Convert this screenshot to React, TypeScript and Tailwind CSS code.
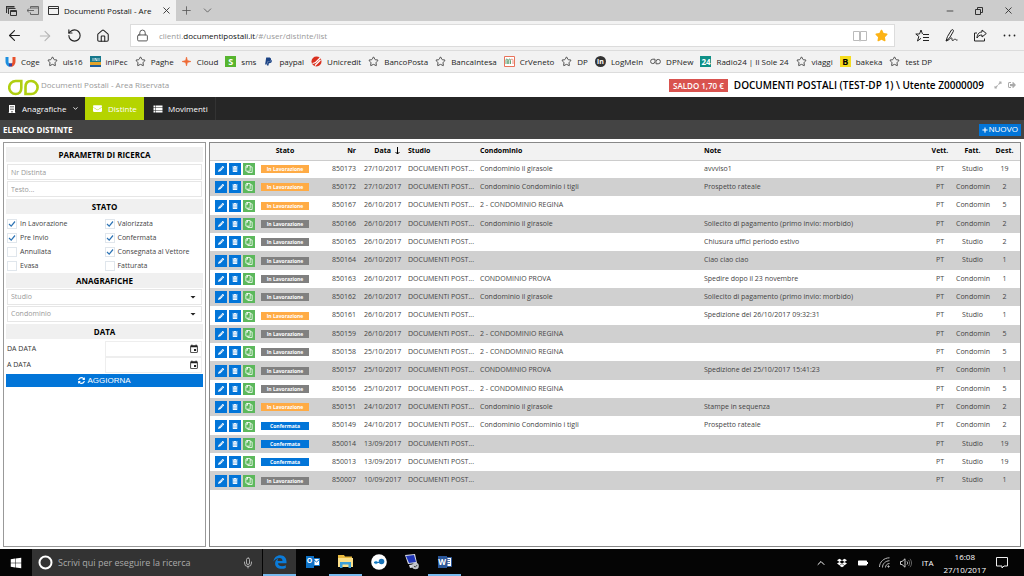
import type { ReactNode } from 'react';
import { ArrowLeft, ArrowRight, BookOpen, ChevronDown, ChevronUp, House, Lock, Mic, Minus, Plus, RotateCw, Star, X } from 'lucide-react';
import { FaBuilding, FaDropbox, FaEnvelope, FaExpandAlt, FaPaypal, FaPencilAlt, FaPlus, FaRegCopy, FaSignOutAlt, FaStar, FaSyncAlt, FaTrashAlt, FaWindows } from 'react-icons/fa';
import { MdArrowDropDown, MdBatteryFull, MdEvent, MdViewList } from 'react-icons/md';

type Stato = 'lavorazione' | 'sospesa' | 'confermata';

interface Distinta {
  nr: number;
  data: string;
  stato: Stato;
  condominio: string;
  note: string;
  fatt: 'Studio' | 'Condomin';
  dest: number;
}

const STATO_STYLE: Record<Stato, { label: string; className: string }> = {
  lavorazione: { label: 'In Lavorazione', className: 'bg-[#ffab45]' },
  sospesa: { label: 'In Lavorazione', className: 'bg-[#808080]' },
  confermata: { label: 'Confermata', className: 'bg-[#0275d8]' },
};

const DISTINTE: Distinta[] = [
  { nr: 850173, data: '27/10/2017', stato: 'lavorazione', condominio: 'Condominio il girasole', note: 'avvviso1', fatt: 'Studio', dest: 19 },
  { nr: 850172, data: '27/10/2017', stato: 'lavorazione', condominio: 'Condominio Condominio i tigli', note: 'Prospetto rateale', fatt: 'Condomin', dest: 2 },
  { nr: 850167, data: '26/10/2017', stato: 'lavorazione', condominio: '2 - CONDOMINIO REGINA', note: '', fatt: 'Condomin', dest: 5 },
  { nr: 850166, data: '26/10/2017', stato: 'sospesa', condominio: 'Condominio il girasole', note: 'Sollecito di pagamento (primo invio: morbido)', fatt: 'Condomin', dest: 2 },
  { nr: 850165, data: '26/10/2017', stato: 'sospesa', condominio: '', note: 'Chiusura uffici periodo estivo', fatt: 'Studio', dest: 2 },
  { nr: 850164, data: '26/10/2017', stato: 'sospesa', condominio: '', note: 'Ciao ciao ciao', fatt: 'Studio', dest: 1 },
  { nr: 850163, data: '26/10/2017', stato: 'sospesa', condominio: 'CONDOMINIO PROVA', note: 'Spedire dopo il 23 novembre', fatt: 'Condomin', dest: 1 },
  { nr: 850162, data: '26/10/2017', stato: 'sospesa', condominio: 'Condominio il girasole', note: 'Sollecito di pagamento (primo invio: morbido)', fatt: 'Condomin', dest: 2 },
  { nr: 850161, data: '26/10/2017', stato: 'lavorazione', condominio: '', note: 'Spedizione del 26/10/2017 09:32:31', fatt: 'Studio', dest: 1 },
  { nr: 850159, data: '26/10/2017', stato: 'sospesa', condominio: '2 - CONDOMINIO REGINA', note: '', fatt: 'Condomin', dest: 5 },
  { nr: 850158, data: '25/10/2017', stato: 'sospesa', condominio: '2 - CONDOMINIO REGINA', note: '', fatt: 'Condomin', dest: 5 },
  { nr: 850157, data: '25/10/2017', stato: 'sospesa', condominio: 'CONDOMINIO PROVA', note: 'Spedizione del 25/10/2017 15:41:23', fatt: 'Condomin', dest: 1 },
  { nr: 850156, data: '25/10/2017', stato: 'sospesa', condominio: '2 - CONDOMINIO REGINA', note: '', fatt: 'Condomin', dest: 5 },
  { nr: 850151, data: '24/10/2017', stato: 'lavorazione', condominio: 'Condominio il girasole', note: 'Stampe in sequenza', fatt: 'Condomin', dest: 2 },
  { nr: 850149, data: '24/10/2017', stato: 'confermata', condominio: 'Condominio Condominio i tigli', note: 'Prospetto rateale', fatt: 'Condomin', dest: 2 },
  { nr: 850014, data: '13/09/2017', stato: 'confermata', condominio: '', note: '', fatt: 'Studio', dest: 19 },
  { nr: 850013, data: '13/09/2017', stato: 'confermata', condominio: '', note: '', fatt: 'Studio', dest: 19 },
  { nr: 850007, data: '10/09/2017', stato: 'sospesa', condominio: '', note: '', fatt: 'Studio', dest: 1 },
];

const STATI = [
  { label: 'In Lavorazione', checked: true },
  { label: 'Valorizzata', checked: true },
  { label: 'Pre Invio', checked: true },
  { label: 'Confermata', checked: true },
  { label: 'Annullata', checked: false },
  { label: 'Consegnata al Vettore', checked: true },
  { label: 'Evasa', checked: false },
  { label: 'Fatturata', checked: false },
];

const outlineStar = <Star size={11} strokeWidth={2} className="text-[#444]" />;

const PREFERITI: { label: string; icon: ReactNode }[] = [
  {
    label: 'Coge',
    icon: (
      <svg width="11" height="11" viewBox="0 0 11 11" fill="none" strokeWidth="3">
        <path d="M2 1v4.500a3.300 3.300 0 0 0 3.500 3.700" stroke="#1c8fe0" />
        <path d="M5.500 9.200A3.300 3.300 0 0 0 9 5.500V1" stroke="#e8502b" />
        <path d="M4 8.800h3" stroke="#3b3f9c" />
      </svg>
    ),
  },
  { label: 'uls16', icon: outlineStar },
  {
    label: 'iniPec',
    icon: (
      <svg width="11" height="11" viewBox="0 0 11 11">
        <path fill="#16788c" d="M0 0h11v6H0z" />
        <path fill="#e2a32c" d="M0 6h11v3H0z" />
        <path fill="#1d5c9d" d="M0 9h11v2H0z" />
        <path stroke="#fff" d="M3 2v3M5 5V2l2 3V2M9 2v3" fill="none" strokeWidth=".7" />
      </svg>
    ),
  },
  { label: 'Paghe', icon: outlineStar },
  {
    label: 'Cloud',
    icon: (
      <svg width="11" height="11" viewBox="0 0 11 11">
        <path fill="#ee6a35" d="M5.500 1l.9 3.600L10 5.500l-3.600.9L5.500 10l-.9-3.600L1 5.500l3.600-.9z" stroke="#ee6a35" strokeWidth=".6" />
      </svg>
    ),
  },
  { label: 'sms', icon: <span className="flex size-[11px] items-center justify-center bg-[#57b52f] text-[9px] leading-none font-bold text-white">S</span> },
  { label: 'paypal', icon: <FaPaypal size={9} className="mx-px text-[#1a4284]" /> },
  {
    label: 'Unicredit',
    icon: (
      <svg width="11" height="11" viewBox="0 0 11 11">
        <circle cx="5.500" cy="5.500" r="5" fill="#d9301f" />
        <path d="M1.500 7.500L4.500 6.500 9 2M4 9.500L9.500 4" stroke="#fff" strokeWidth="1.200" fill="none" />
      </svg>
    ),
  },
  { label: 'BancoPosta', icon: outlineStar },
  { label: 'BancaIntesa', icon: outlineStar },
  {
    label: 'CrVeneto',
    icon: (
      <svg width="11" height="11" viewBox="0 0 11 11" fill="none">
        <path d="M.5.5h10v10H.5z" fill="#fff" stroke="#e8735a" />
        <path d="M2 8V3.500c1-1 2 0 1.700 1V8M4.800 8V3.500c1-1 2 0 1.700 1V8" stroke="#3f8a57" strokeWidth=".8" />
        <path d="M7 3.500c1.500-1 2 0 2 1V8" stroke="#e8735a" strokeWidth=".8" />
      </svg>
    ),
  },
  { label: 'DP', icon: outlineStar },
  { label: 'LogMeIn', icon: <span className="flex size-[11px] items-center justify-center rounded-full bg-[#333] text-[7px] leading-none font-bold text-white">in</span> },
  {
    label: 'DPNew',
    icon: (
      <svg width="11" height="11" viewBox="0 0 11 11" fill="none" stroke="#555">
        <path d="M5 3.200H2.800a2.200 2.200 0 1 0 2.200 2.300zM6 7.800h2.200a2.200 2.200 0 1 0-2.200-2.300z" />
      </svg>
    ),
  },
  { label: 'Radio24 | Il Sole 24', icon: <span className="flex size-[11px] items-center justify-center bg-[#0f9086] text-[8px] leading-none font-bold text-white">24</span> },
  { label: 'viaggi', icon: outlineStar },
  { label: 'bakeka', icon: <span className="flex size-[11px] items-center justify-center bg-[#f5dc1e] text-[9px] leading-none font-bold text-black">B</span> },
  { label: 'test DP', icon: outlineStar },
];

function BrowserTabs() {
  return (
    <div className="flex h-[21px] items-stretch bg-[#cccccc] text-[#333]">
      <div className="flex w-[43px] items-center justify-between pr-1 pl-1.5">
        <svg width="11" height="10" viewBox="0 0 11 10" fill="none" stroke="#333">
          <path d="M.5 7V.5h8M.5 2h8" strokeWidth="1.200" />
          <path d="M2.500 8V2.500h7M4.500 4.500h6v5h-6zM4.500 5.500h6" />
        </svg>
        <svg width="12" height="9" viewBox="0 0 12 9" fill="none" stroke="#666">
          <path d="M3.500 2.500v-2h8v8h-8v-2M3.500 2h8M0 4.500h7M2 2.500l-2 2 2 2" />
        </svg>
      </div>
      <div className="flex w-[133px] items-center bg-[#f2f2f2] pr-1 pl-[5px]">
        <svg width="11" height="9" viewBox="0 0 11 9" fill="none" stroke="#333">
          <path d="M.5.5h10v8H.5zM.5 2.500h10" />
        </svg>
        <span className="flex-1 pl-[5px] text-[8px] whitespace-nowrap text-[#111]">Documenti Postali - Are</span>
        <button type="button" aria-label="Chiudi scheda"><X size={11} strokeWidth={2} /></button>
      </div>
      <div className="flex flex-1 items-center gap-2 pl-1 text-[#555]">
        <button type="button" aria-label="Nuova scheda"><Plus size={13} strokeWidth={1.5} /></button>
        <button type="button" aria-label="Anteprime"><ChevronDown size={13} strokeWidth={1.5} /></button>
      </div>
      <div className="flex items-center gap-5 pr-2.5">
        <button type="button" aria-label="Riduci"><Minus size={10} strokeWidth={2} /></button>
        <button type="button" aria-label="Ripristina">
          <svg width="8" height="8" viewBox="0 0 8 8" fill="none" stroke="#333"><path d="M.5 2.500h5v5h-5zM2.500 2V.5h5v5H6" /></svg>
        </button>
        <button type="button" aria-label="Chiudi"><X size={11} strokeWidth={2} /></button>
      </div>
    </div>
  );
}

function AddressBar() {
  return (
    <div className="flex h-[30px] items-center border-b border-[#dcdcdc] bg-[#f2f2f2] pr-2 pl-1.5 text-[#222]">
      <div className="flex items-center gap-3.5">
        <button type="button" aria-label="Indietro"><ArrowLeft size={17} strokeWidth={1.6} /></button>
        <button type="button" aria-label="Avanti" className="text-[#b5b5b5]"><ArrowRight size={16} strokeWidth={1.6} /></button>
        <button type="button" aria-label="Aggiorna">
          <RotateCw size={15} strokeWidth={1.8} className="-scale-x-100" />
        </button>
        <button type="button" aria-label="Pagina iniziale"><House size={14} strokeWidth={1.8} /></button>
      </div>
      <div className="ml-5 flex h-[23px] flex-1 items-center border border-[#dcdcdc] bg-white pr-1.5 pl-[5px]">
        <Lock size={13} strokeWidth={1.8} className="text-[#555]" />
        <p className="flex-1 pl-2.5 text-[8px] text-[#999]">
          clienti.<span className="text-[#111]">documentipostali.it</span>/#/user/distinte/list
        </p>
        <button type="button" aria-label="Visualizzazione lettura" className="text-[#bbb]">
          <svg width="14" height="12" viewBox="0 0 14 12" fill="none" stroke="currentColor">
            <path d="M.5 1.500h6v9h-6zM7.500 1.500h6v9h-6zM7 1.500v10" />
          </svg>
        </button>
        <button type="button" aria-label="Preferito" className="ml-2 text-[#fcb316]"><FaStar size={13} /></button>
      </div>
      <div className="ml-5 flex items-center gap-4">
        <button type="button" aria-label="Hub">
          <svg width="14" height="13" viewBox="0 0 14 13" fill="none" stroke="currentColor">
            <path d="M7.500 5L6 1 4.500 5H.8l3 2.500L2.500 12 6 9.300M8 5.500h6M8 8.500h6M8 11.500h6" />
          </svg>
        </button>
        <button type="button" aria-label="Note Web">
          <svg width="13" height="13" viewBox="0 0 13 13" fill="none" stroke="currentColor">
            <path d="M1 12L2.500 7.500 6.500 1c1-1 2.500 0 1.800 1.500L4.500 9 1 12c3-.5 4-3 5.500-3s-.5 2.500 1 2.500 1.500-1.500 2.500-1.500.5 1.500 2.500 1" />
          </svg>
        </button>
        <button type="button" aria-label="Condividi">
          <svg width="13" height="13" viewBox="0 0 13 13" fill="none" stroke="currentColor">
            <path d="M3 4H.5v8h10V9.500M8 1l4.300 3.500L8 8V6C5.500 6 4 7 3 9c0-3 1.500-6 5-6z" />
          </svg>
        </button>
        <button type="button" aria-label="Altro">
          <svg width="13" height="3" viewBox="0 0 13 3" fill="currentColor">
            <circle cx="1.500" cy="1.500" r=".9" /><circle cx="6.500" cy="1.500" r=".9" /><circle cx="11.500" cy="1.500" r=".9" />
          </svg>
        </button>
      </div>
    </div>
  );
}

function FavoritesBar() {
  return (
    <nav className="flex h-[22px] items-center gap-[7px] border-b border-[#dcdcdc] bg-[#f2f2f2] pl-[5px] text-[8px] text-[#222]">
      {PREFERITI.map(p => (
        <a key={p.label} href="#" className="flex items-center gap-[5px] whitespace-nowrap">
          {p.icon}
          {p.label}
        </a>
      ))}
    </nav>
  );
}

function AppHeader() {
  return (
    <>
      <header className="flex h-6 items-center bg-white pr-2 pl-2">
        <svg width="31" height="17" viewBox="0 0 31 17" fill="none" stroke="#b0cf10" strokeWidth="2.600" className="mt-1">
          <path d="M13.300 2H7.700a6.300 6.300 0 0 0 0 13c3.600 0 5.600-2.500 5.600-6z" />
          <path d="M17.500 15h5.600a6.300 6.300 0 0 0 0-13c-3.600 0-5.600 2.500-5.600 6z" />
        </svg>
        <span className="pl-0.5 text-[8px] text-[#999]">Documenti Postali - Area Riservata</span>
        <div className="ml-auto flex items-center">
          <span className="bg-[#d9534f] px-1 text-[8px] leading-[13px] font-semibold text-white">SALDO 1,70 €</span>
          <span className="ml-1.5 text-[10px] font-semibold text-black">DOCUMENTI POSTALI (TEST-DP 1) \ Utente Z0000009</span>
          <button type="button" aria-label="Schermo intero" className="ml-2.5 text-[#aaa]"><FaExpandAlt size={8} /></button>
          <button type="button" aria-label="Esci" className="ml-1.5 text-[#aaa]"><FaSignOutAlt size={8} /></button>
        </div>
      </header>
      <nav className="flex h-[23px] items-stretch bg-[#262626] text-[8px] text-white">
        <a href="#" className="flex w-[85px] items-center gap-1.5 pl-2">
          <FaBuilding size={8} />
          Anagrafiche
          <ChevronDown size={7} strokeWidth={3} />
        </a>
        <a href="#" className="flex w-[59px] items-center gap-1.5 bg-[#b5d400] pl-2">
          <FaEnvelope size={9} />
          Distinte
        </a>
        <a href="#" className="flex w-[72px] items-center gap-1 border-r border-[#333] pl-2">
          <MdViewList size={12} />
          Movimenti
        </a>
      </nav>
      <div className="flex h-[19px] items-center justify-between bg-[#444] pr-[3px] pl-[3px]">
        <h1 className="text-[8px] font-bold text-white">ELENCO DISTINTE</h1>
        <button type="button" className="flex h-3 items-center gap-px bg-[#0275d8] px-[3px] font-['Liberation_Sans',sans-serif] text-[8px] text-white">
          <FaPlus size={6} />
          NUOVO
        </button>
      </div>
    </>
  );
}

function SectionTitle({ children }: { children: ReactNode }) {
  return <h2 className="bg-[#f0f0f0] text-center text-[8px] leading-[15px] font-bold text-black">{children}</h2>;
}

function FilterSelect({ label }: { label: string }) {
  return (
    <div className="grid h-4 items-center border border-[#e6e6e6]">
      <select aria-label={label} className="col-start-1 row-start-1 w-full appearance-none px-[3px] text-[7px] text-[#999]">
        <option>{label}</option>
      </select>
      <MdArrowDropDown size={12} className="pointer-events-none col-start-1 row-start-1 mr-0.5 justify-self-end text-[#222]" />
    </div>
  );
}

function DateField({ id, label }: { id: string; label: string }) {
  return (
    <div className="flex h-4 items-center">
      <label htmlFor={id} className="w-1/2 text-[7px] text-[#333]">{label}</label>
      <div className="flex h-4 w-1/2 items-center border border-[#eee] pr-0.5">
        <input id={id} type="text" className="min-w-0 flex-1 px-1 text-[7px] outline-none" />
        <button type="button" aria-label={`Calendario ${label}`}><MdEvent size={10} className="text-[#222]" /></button>
      </div>
    </div>
  );
}

function SearchPanel() {
  return (
    <aside className="w-[203px] shrink-0 border border-[#999] px-0.5 pt-1">
      <form onSubmit={e => e.preventDefault()}>
        <SectionTitle>PARAMETRI DI RICERCA</SectionTitle>
        <div className="flex flex-col gap-px px-px pt-0.5 pb-0.5">
          <input type="text" aria-label="Nr Distinta" placeholder="Nr Distinta" className="h-4 border border-[#e6e6e6] px-[3px] text-[7px] placeholder:text-[#999]" />
          <input type="text" aria-label="Testo" placeholder="Testo..." className="h-4 border border-[#e6e6e6] px-[3px] text-[7px] placeholder:text-[#999]" />
        </div>
        <SectionTitle>STATO</SectionTitle>
        <div className="grid grid-cols-2 px-px pt-[3px]">
          {STATI.map(s => (
            <label key={s.label} className="flex h-3.5 items-center gap-[3px] text-[7px] text-[#444]">
              <span className="grid size-[10px] place-items-center">
                <input type="checkbox" defaultChecked={s.checked} className="peer col-start-1 row-start-1 size-[10px] appearance-none border border-[#e0e6ec] bg-white" />
                <svg width="8" height="8" viewBox="0 0 8 8" fill="none" stroke="#2e74b5" strokeWidth="1.200" className="pointer-events-none invisible col-start-1 row-start-1 peer-checked:visible">
                  <path d="M1 4l2.200 2.200L7 1.500" />
                </svg>
              </span>
              {s.label}
            </label>
          ))}
        </div>
        <SectionTitle>ANAGRAFICHE</SectionTitle>
        <div className="flex flex-col gap-px px-px pt-px pb-0.5">
          <FilterSelect label="Studio" />
          <FilterSelect label="Condominio" />
        </div>
        <SectionTitle>DATA</SectionTitle>
        <div className="flex flex-col px-px pt-0.5 pb-px">
          <DateField id="da-data" label="DA DATA" />
          <DateField id="a-data" label="A DATA" />
        </div>
        <button type="submit" className="flex h-[13px] w-full items-center justify-center gap-0.5 bg-[#0275d8] font-['Liberation_Sans',sans-serif] text-[8px] text-white">
          <FaSyncAlt size={7} />
          AGGIORNA
        </button>
      </form>
    </aside>
  );
}

function RowActions({ nr }: { nr: number }) {
  return (
    <div className="flex gap-0.5 pl-[5px] text-white">
      <button type="button" aria-label={`Modifica ${nr}`} className="flex size-3 items-center justify-center bg-[#0275d8]"><FaPencilAlt size={6} /></button>
      <button type="button" aria-label={`Elimina ${nr}`} className="flex size-3 items-center justify-center bg-[#0275d8]"><FaTrashAlt size={6} /></button>
      <button type="button" aria-label={`Duplica ${nr}`} className="flex size-3 items-center justify-center bg-[#5cb85c]"><FaRegCopy size={8} className="-scale-x-100" /></button>
    </div>
  );
}

function DistinteTable() {
  return (
    <section className="min-w-0 flex-1 border border-[#888]">
      <table className="w-full table-fixed text-[7px] text-[#444]">
        <colgroup>
          <col className="w-12" />
          <col className="w-[54px]" />
          <col className="w-12" />
          <col className="w-11" />
          <col className="w-[72px]" />
          <col />
          <col />
          <col className="w-8" />
          <col className="w-[33px]" />
          <col className="w-[31px]" />
        </colgroup>
        <thead>
          <tr className="h-[17px] border-b border-[#ccc] bg-[#f2f2f2] text-left text-black">
            <th />
            <th className="text-center">Stato</th>
            <th className="px-1 text-right">Nr</th>
            <th className="px-1">
              <span className="flex items-center justify-end gap-1">
                Data
                <svg width="5" height="8" viewBox="0 0 5 8" fill="none" stroke="#000"><path d="M2.500 0v7M.5 5l2 2 2-2" /></svg>
              </span>
            </th>
            <th className="px-1">Studio</th>
            <th className="px-1">Condominio</th>
            <th className="px-1">Note</th>
            <th className="text-center">Vett.</th>
            <th className="text-center">Fatt.</th>
            <th className="text-center">Dest.</th>
          </tr>
        </thead>
        <tbody>
          {DISTINTE.map(d => (
            <tr key={d.nr} className="h-[18px] even:bg-[#d0d0d0] nth-[3n]:h-[19px]">
              <td><RowActions nr={d.nr} /></td>
              <td className="px-[3px]">
                <span className={`block text-center text-[5px] leading-[8px] font-bold text-white ${STATO_STYLE[d.stato].className}`}>
                  {STATO_STYLE[d.stato].label}
                </span>
              </td>
              <td className="px-1 text-right">{d.nr}</td>
              <td className="px-1 text-right">{d.data}</td>
              <td className="pl-1 whitespace-nowrap">DOCUMENTI POST...</td>
              <td className="truncate px-1">{d.condominio}</td>
              <td className="truncate px-1">{d.note}</td>
              <td className="text-center">PT</td>
              <td className="text-center">{d.fatt}</td>
              <td className="text-center">{d.dest}</td>
            </tr>
          ))}
        </tbody>
      </table>
    </section>
  );
}

function TaskButton({ label, active, running, children }: { label: string; active?: boolean; running?: boolean; children: ReactNode }) {
  return (
    <button
      type="button"
      aria-label={label}
      className={`flex w-[33px] items-center justify-center border-b-2 ${active ? 'bg-[#333]' : ''} ${active || running ? 'border-[#76b9ed]' : 'border-transparent'}`}
    >
      {children}
    </button>
  );
}

function Taskbar() {
  return (
    <footer className="flex h-[27px] shrink-0 items-stretch bg-[#050505] text-white">
      <button type="button" aria-label="Start" className="flex w-8 items-center justify-center"><FaWindows size={12} /></button>
      <div className="flex w-[230px] items-center bg-[#333] pr-2 pl-1.5">
        <svg width="15" height="15" viewBox="0 0 15 15" fill="none" stroke="#fff" strokeWidth="2"><circle cx="7.500" cy="7.500" r="6" /></svg>
        <input type="text" aria-label="Cerca" placeholder="Scrivi qui per eseguire la ricerca" className="min-w-0 flex-1 pl-[5px] text-[9px] outline-none placeholder:text-[#aaa]" />
        <Mic size={12} strokeWidth={1.6} className="text-[#ccc]" />
      </div>
      <div className="ml-px flex">
        <TaskButton label="Microsoft Edge" active>
          <svg width="14" height="14" viewBox="0 0 14 14" fill="#0b7bd8">
            <path d="M.5 6.500C1 2.500 3.800.3 7.200.3c4 0 6.300 2.900 6.300 6.500v1.500H5c.2 2.200 2 3 4 3 1.500 0 2.800-.4 3.800-1v2.600c-1.200.6-2.700.9-4.300.9-3.700 0-6.400-2-6.400-5.300 0-2.300 1.300-4 3.300-4.900-.5.600-.8 1.400-.9 2.300h5c0-1.800-1-2.900-2.900-2.900C4 3 1.800 4.300.5 6.500z" />
          </svg>
        </TaskButton>
        <TaskButton label="Outlook">
          <span className="flex items-center">
            <span className="flex h-3 w-2 items-center justify-center bg-[#0f72c6] text-[7px] font-bold">O</span>
            <svg width="6" height="8" viewBox="0 0 6 8"><path fill="#fff" stroke="#0f72c6" d="M0 .5h5.500v7H0z" /><path d="M0 2l2.500 2L6 1" stroke="#0f72c6" fill="none" /></svg>
          </span>
        </TaskButton>
        <TaskButton label="Esplora file" running>
          <svg width="15" height="13" viewBox="0 0 15 13">
            <path fill="#e8b93e" d="M0 0h6l1 1.500h7V12H0z" />
            <path fill="#fbe08a" d="M0 3h15v9H0z" />
            <path fill="#3c9fd8" d="M2 7h11v6h-2.500V9.500h-6V13H2z" />
          </svg>
        </TaskButton>
        <TaskButton label="TeamViewer">
          <svg width="16" height="16" viewBox="0 0 16 16">
            <circle cx="8" cy="8" r="7.800" fill="#fff" />
            <circle cx="5" cy="8.500" r="1.800" fill="#4aa6de" />
            <circle cx="10.500" cy="7.500" r="2.800" fill="#1672b8" />
            <path d="M3 8.500h7" stroke="#1672b8" />
          </svg>
        </TaskButton>
        <TaskButton label="Desktop remoto">
          <svg width="15" height="16" viewBox="0 0 15 16">
            <path fill="#d8dce4" d="M1 1l10-1 2 9-9 1zM5 11l6-1 1 3-6 1z" />
            <path fill="#1f35b8" d="M2 2l8-1 2 7-7 1z" />
            <circle cx="11.500" cy="12" r="3.300" fill="#bfc3c8" />
            <path d="M10 12l1.200 1.200L13.200 11" stroke="#444" fill="none" />
          </svg>
        </TaskButton>
        <TaskButton label="Word" running>
          <span className="flex items-center">
            <span className="flex h-3 w-[9px] items-center justify-center bg-[#2b579a] text-[8px] font-bold">W</span>
            <svg width="5" height="10" viewBox="0 0 5 10"><path fill="#fff" stroke="#2b579a" d="M0 .5h4.500v9H0z" /><path d="M0 2.500h3M0 4.500h3M0 6.500h3" stroke="#2b579a" strokeWidth=".8" /></svg>
          </span>
        </TaskButton>
      </div>
      <div className="ml-auto flex items-center gap-2.5 pr-4 text-[8px]">
        <ChevronUp size={12} strokeWidth={2} />
        <FaDropbox size={10} />
        <MdBatteryFull size={12} className="rotate-90" />
        <svg width="11" height="11" viewBox="0 0 11 11" fill="none" stroke="#bbb">
          <path d="M.5 10C.5 5 5 .8 10.500.8M3.500 10.500c0-4 3-6.500 7-6.800M6.500 10.500c0-2 1.500-4 4-4" />
          <circle cx="9.500" cy="9.500" r=".7" fill="#bbb" />
        </svg>
        <svg width="12" height="10" viewBox="0 0 12 10" fill="none" stroke="#ccc">
          <path d="M.5 3.500H2L5 .8v8.400L2 6.500H.5z" />
          <path d="M7 3.500c.8 1 .8 2 0 3" />
          <path d="M8.500 2c1.500 2 1.500 4 0 6M10 .8c2 2.500 2 6 0 8.400" stroke="#666" />
        </svg>
        <span>ITA</span>
        <time className="text-center leading-[13px]">16:08<br />27/10/2017</time>
        <svg width="12" height="12" viewBox="0 0 12 12" fill="none" stroke="#eee">
          <path d="M.5.5h11v8.500H8L6 11 6 9H.5z" />
        </svg>
      </div>
    </footer>
  );
}

export default function App() {
  return (
    <div className="flex h-screen flex-col overflow-hidden bg-white font-['Open_Sans','Noto_Sans',sans-serif]">
      <BrowserTabs />
      <AddressBar />
      <FavoritesBar />
      <AppHeader />
      <main className="flex min-h-0 flex-1 gap-[3px] px-[3px] pt-[3px] pb-0.5">
        <SearchPanel />
        <DistinteTable />
      </main>
      <Taskbar />
    </div>
  );
}
